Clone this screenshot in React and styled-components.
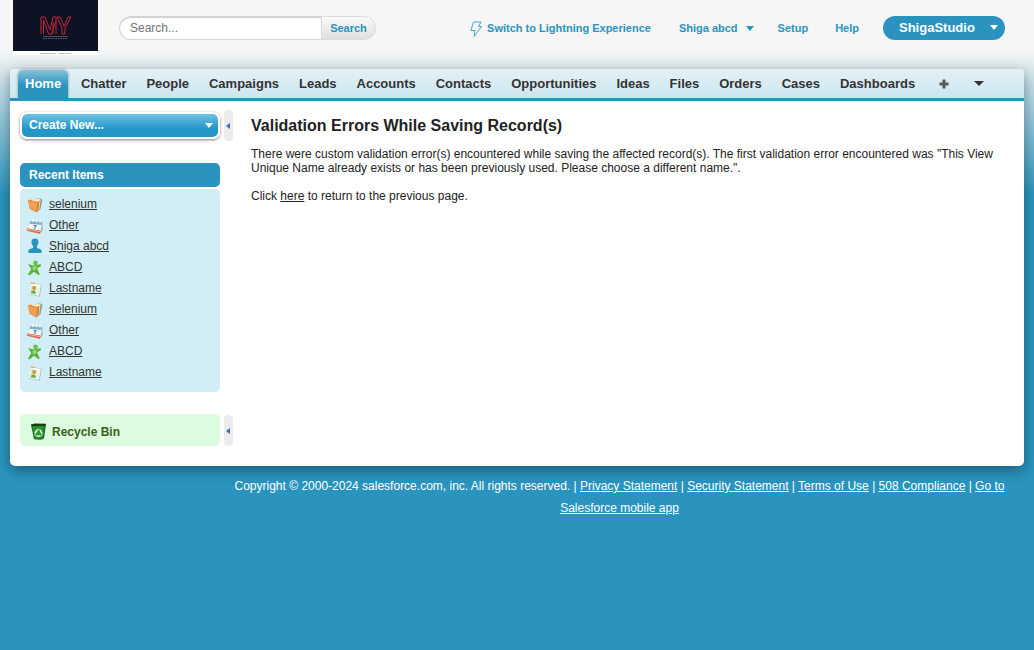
import React from "react";
import styled, { createGlobalStyle, css } from "styled-components";

const Global = createGlobalStyle`
  * { box-sizing: border-box; }
  html { background: #2a94be; }
  body {
    margin: 0;
    min-height: 650px;
    font: 12px/14px "Liberation Sans", Arial, sans-serif;
    color: #222;
    background: linear-gradient(#f6f6f6 0, #f6f6f6 50px, #2a94be 195px) no-repeat #2a94be;
  }
  a { color: inherit; }
`;

const Header = styled.header`
  height: 69px;
  display: flex;
  align-items: flex-start;
  padding: 0 29px 0 13px;
`;
const Logo = styled.svg`
  width: 85px;
  height: 55px;
  display: block;
  margin-right: 21px;
`;
const SearchForm = styled.div`
  display: flex;
  width: 257px;
  height: 24px;
  margin-top: 16px;
`;
const SearchInput = styled.input`
  width: 202px;
  height: 24px;
  border: 1px solid #d4d4d4;
  border-right: 0;
  border-radius: 12px 0 0 12px;
  padding: 0 0 1px 10px;
  background: #fff;
  box-shadow: inset 0 1px 1px #ccc;
  font: 12px "Liberation Sans", Arial, sans-serif;
  outline: 0;
  &::placeholder { color: #757575; opacity: 1; }
`;
const SearchButton = styled.button`
  width: 55px;
  height: 24px;
  padding: 0;
  border: 1px solid #dcdcdc;
  border-radius: 0 12px 12px 0;
  background: linear-gradient(#f9f9f9, #e0e0e0);
  color: #2a94be;
  font: bold 11px "Liberation Sans", Arial, sans-serif;
`;
const Links = styled.div`
  flex: 1;
  display: flex;
  justify-content: flex-end;
  align-items: center;
  height: 24px;
  margin-top: 16px;
  color: #2a94be;
  font-size: 11px;
  font-weight: bold;
`;
const HeaderLink = styled.span`
  display: flex;
  align-items: center;
  white-space: nowrap;
  margin-right: ${(p) => p.$gap}px;
`;
const Bolt = styled.svg`
  width: 13px;
  height: 17px;
  margin: 2px 4px 0 0;
`;
const Caret = styled.i`
  flex: none;
  border: ${(p) => p.$size}px solid transparent;
  border-top-width: ${(p) => p.$size + 1}px;
  border-top-color: currentColor;
  border-bottom: 0;
`;
const AppMenu = styled.button`
  display: flex;
  align-items: center;
  justify-content: space-between;
  width: 122px;
  height: 24px;
  border: 0;
  border-radius: 12px;
  padding: 0 7px 1px 16px;
  background: #2a94be;
  color: #fff;
  font: bold 13px "Liberation Sans", Arial, sans-serif;
`;
const Panel = styled.main`
  height: 397px;
  margin: 0 10px;
  border-radius: 4px 4px 5px 5px;
  background: #fff;
  box-shadow: 0 4px 14px rgba(0, 0, 0, 0.38);
`;
const Nav = styled.nav`
  display: flex;
  height: 32px;
  padding: 1px 0 0 8px;
  border-bottom: 3px solid #2a94be;
  border-radius: 4px 4px 0 0;
  background: linear-gradient(#e3f1f6, #cde6ee);
`;
const Tab = styled.span`
  height: 28px;
  line-height: 27px;
  font-size: 13px;
  font-weight: bold;
  color: #333;
  padding: 0 ${(p) => (p.$active ? 7 : 9.97)}px;
  ${(p) =>
    p.$active &&
    css`
      width: 50px;
      margin-right: 3px;
      color: #fff;
      border-radius: 5px 5px 0 0;
      background: linear-gradient(#85c1da, #2a94be 55%);
      box-shadow: 0 0 3px rgba(0, 0, 0, 0.4);
      clip-path: inset(-3px -3px 0 -3px);
    `}
`;
const NavIcon = styled.svg`
  width: 10px;
  height: 10px;
  margin: 9px 0 0 ${(p) => p.$gap}px;
`;
const Columns = styled.div`
  display: grid;
  grid-template-columns: 200px 9px 1fr;
  column-gap: 4px;
  padding: 9px 0 0 10px;
`;
const Sidebar = styled.aside`
  padding-top: 2px;
`;
const CreateButton = styled.button`
  display: flex;
  align-items: center;
  justify-content: space-between;
  width: 200px;
  height: 27px;
  padding: 0 5px 1px 7px;
  border: 2px solid #fff;
  border-radius: 7px;
  background: linear-gradient(#70c2e2, #2197c8 65%, #2496c6) padding-box;
  box-shadow: 0 1px 3px rgba(0, 0, 0, 0.5);
  color: #fff;
  font: bold 12px "Liberation Sans", Arial, sans-serif;
`;
const SectionTitle = styled.h2`
  height: 24px;
  margin: 24px 0 2px;
  padding-left: 9px;
  border-radius: 5px;
  background: #2a94be;
  color: #fff;
  font-size: 12px;
  line-height: 24px;
`;
const RecentList = styled.ul`
  height: 203px;
  margin: 0;
  padding: 4px 0 0 7px;
  list-style: none;
  border-radius: 5px;
  background: #d1eef6;
`;
const RecentRow = styled.li`
  display: flex;
  align-items: center;
  height: 21px;
  color: #333;
  a { margin-left: 6px; }
`;
const RowIcon = styled.svg`
  width: 16px;
  height: 16px;
  margin-top: ${(p) => (p.$low ? 2 : 0)}px;
`;
const RecycleBin = styled.div`
  display: flex;
  align-items: center;
  height: 32px;
  margin-top: 22px;
  padding: 3px 0 0 10px;
  border-radius: 5px;
  background: #dcfbdf;
  color: #3b5f1c;
  font-weight: bold;
`;
const BinIcon = styled.svg`
  width: 17px;
  height: 17px;
  margin-right: 5px;
`;
const Handles = styled.div`
  display: flex;
  flex-direction: column;
  justify-content: space-between;
  height: 336px;
`;
const Handle = styled.span`
  display: flex;
  align-items: center;
  height: 31px;
  padding-left: 2px;
  border-radius: 4px;
  background: #ebebeb;
  &::before {
    content: "";
    border: 3px solid transparent;
    border-right: 4px solid #3a6fb7;
    border-left: 0;
  }
`;
const Content = styled.section`
  padding: 7px 20px 0 14px;
  h1 { margin: 0 0 13px; font-size: 16px; line-height: 17px; }
  p { margin: 0 0 14px; }
`;
const Footer = styled.footer`
  width: 785px;
  margin: 9px 0 0 227px;
  text-align: center;
  line-height: 22px;
  color: #fff;
`;

const FolderIcon = () => (
  <>
    <path d="M7 2.200l6-1 2.500 1.500-2 9.500-4 3z" fill="#a39a8d" />
    <path d="M6 2.600l6-.8 1.500 1-1.500 10-2.600 1.500z" fill="#f8ead0" />
    <path d="M1 3.200l3-.6 1.500 1.200 5 .9-1 10.800-7-3.700z" fill="#e98b3d" />
    <path d="M1.300 4.300l8.700 1.700-.8 8.300L2.800 11z" fill="#f3a057" />
    <path d="M10.500 5l2-1.500-1.200 9.500-1.800 2.300z" fill="#cf7529" />
  </>
);
const CalendarIcon = () => (
  <>
    <path d="M3 3.500l12.500.5v8.500L13 15.700 0 12.500l.5-2z" fill="#9db0b8" />
    <path d="M3.500 3.500L15 4.500 13.700 13 .3 10.600z" fill="#f1f8fb" />
    <path d="M3.700 3L15 4l-.4 3L2.400 5.800z" fill="#7bb4d0" />
    <path d="M0 10.300l13.300 2.200-.5 3.200L0 12.700z" fill="#d9693b" />
    <path d="M.4 11.300l12.500 2.300" stroke="#f9dccb" strokeWidth=".7" />
    <path d="M6 1v3M9.500 1.200v3M13 1.500v3" stroke="#f3f8fa" strokeWidth="1.500" />
    <path d="M6.500 7.500l2.500.3-1.500 3" stroke="#3685b5" strokeWidth="1.200" fill="none" />
  </>
);
const PersonIcon = () => (
  <path d="M8 .5C3.700.5 3.800 5.400 6 8v2l-3.500 1.200c-1.400.7-1.500 2.500-.8 3.900h12.600c.7-1.400.6-3.200-.8-3.900L10 10V8C12.200 5.400 12.300.5 8 .5z" fill="#2a94be" />
);
const StarPersonIcon = () => (
  <>
    <path d="M1 4l5.200 1.500 7.500-1.200.3 1.600-4 2.700 2.800 5.700-1.500.8-4.300-3.300-4.500 3.700-1.500-1L4.300 9z" fill="#5ab137" />
    <path d="M5.500 6.700l4.500-.6-1.200 3.700-3 .5z" fill="#9ad873" />
    <circle cx="8.500" cy="2.900" r="2.400" fill="#72c14d" />
  </>
);
const ContactIcon = () => (
  <>
    <path d="M4 2l10.500 1.500-1.800 12.300L2 13.300z" fill="#a4b3b6" />
    <path d="M3.800 1.200l4 .5.500 1.200 5.600.8L12 15 2.200 12.700z" fill="#f7f9f5" />
    <path d="M3.800 1.200l4 .5.500 1.200-4.700-.2z" fill="#eda068" />
    <path d="M4.500 4.500l5.300.8-1 8L3.300 12z" fill="#cbe5bc" />
    <circle cx="7.100" cy="7" r="1.900" fill="#d9913f" />
    <path d="M3.800 12c.5-3.700 5-3.500 5 .9z" fill="#5caf43" />
    <path d="M11.200 7l1 .2M10.900 9l1 .2M10.600 11l1 .2" stroke="#bcc9c6" />
  </>
);
const icons = {
  folder: FolderIcon,
  calendar: CalendarIcon,
  person: PersonIcon,
  star: StarPersonIcon,
  contact: ContactIcon,
};

const tabs = ["Chatter", "People", "Campaigns", "Leads", "Accounts", "Contacts", "Opportunities", "Ideas", "Files", "Orders", "Cases", "Dashboards"];
const recent = [
  ["folder", "selenium"],
  ["calendar", "Other"],
  ["person", "Shiga abcd"],
  ["star", "ABCD"],
  ["contact", "Lastname"],
  ["folder", "selenium"],
  ["calendar", "Other"],
  ["star", "ABCD"],
  ["contact", "Lastname"],
];

export default function App() {
  return (
    <>
      <Global />
      <Header>
        <Logo viewBox="0 0 85 55">
          <path fill="#fff" d="M0 0h85v55H0z" />
          <path fill="#0d1224" d="M0 0h85v51H0z" />
          <g fill="none" stroke="#c62732" strokeWidth="1">
            <path d="M28 34V17h4l5 13 3-13h3v17M30.500 34V20l5 14h3l4-12" />
            <path d="M44 17h3l4 9 4-9h3L52 28v6h-3v-6l-5-11zM40 34V22" />
          </g>
          <path d="M30 36.500h25" stroke="#77777d" strokeWidth=".6" />
          <path d="M30 38.500h25" stroke="#62636c" strokeDasharray="1.500 1" />
          <path d="M27 53.500h16M46 53.500h12" stroke="#aaa" strokeDasharray="1.500 .6" />
        </Logo>
        <SearchForm>
          <SearchInput placeholder="Search..." />
          <SearchButton>Search</SearchButton>
        </SearchForm>
        <Links>
          <HeaderLink $gap={28}>
            <Bolt viewBox="0 0 13 17" fill="none" stroke="#4aa5c9">
              <path d="M3.500 1h7.500L8.500 5.500h3L4 15.500 5 9.500H.8z" />
            </Bolt>
            Switch to Lightning Experience
          </HeaderLink>
          <HeaderLink $gap={24}>
            <span>Shiga abcd</span>
            <Caret $size={4} style={{ marginLeft: 8 }} />
          </HeaderLink>
          <HeaderLink $gap={27}>Setup</HeaderLink>
          <HeaderLink $gap={24}>Help</HeaderLink>
          <AppMenu>
            ShigaStudio
            <Caret $size={4} />
          </AppMenu>
        </Links>
      </Header>
      <Panel>
        <Nav>
          <Tab $active>Home</Tab>
          {tabs.map((t) => (
            <Tab key={t}>{t}</Tab>
          ))}
          <NavIcon $gap={14} viewBox="0 0 10 10">
            <path d="M3.500.500h3v3h3v3h-3v3h-3v-3h-3v-3h3z" fill="#58595b" />
          </NavIcon>
          <NavIcon $gap={25} viewBox="0 0 10 10">
            <path d="M0 2h10L5 7z" fill="#333" />
          </NavIcon>
        </Nav>
        <Columns>
          <Sidebar>
            <CreateButton>
              Create New...
              <Caret $size={4} />
            </CreateButton>
            <SectionTitle>Recent Items</SectionTitle>
            <RecentList>
              {recent.map(([kind, label], i) => {
                const Icon = icons[kind];
                return (
                  <RecentRow key={i}>
                    <RowIcon $low={kind !== "person"} viewBox="0 0 16 16"><Icon /></RowIcon>
                    <a href="#">{label}</a>
                  </RecentRow>
                );
              })}
            </RecentList>
            <RecycleBin>
              <BinIcon viewBox="0 0 17 17">
                <path d="M1 2l15-1-2 14.500-3 1.300-7-.6z" fill="#176b1d" />
                <path d="M2 3l12 .3-1.500 12-7.500.3z" fill="#2c942c" />
                <path d="M.8 1.500L5 .4l11 .4-.5 2L2 3.300z" fill="#173c17" />
                <path d="M7 7L5 10.500M10 7l2 3.500M6.500 13h4" stroke="#e4f5df" strokeWidth="1.700" />
                <path d="M7 6.500h2.500M4.500 11l1 2M12.500 11l-1.200 2" stroke="#bfe5b8" />
              </BinIcon>
              Recycle Bin
            </RecycleBin>
          </Sidebar>
          <Handles>
            <Handle />
            <Handle />
          </Handles>
          <Content>
            <h1>Validation Errors While Saving Record(s)</h1>
            <p>
              There were custom validation error(s) encountered while saving the affected record(s). The first validation error encountered was "This View Unique Name already exists or has been previously used. Please choose a different name.".
            </p>
            <p>
              Click <a href="#">here</a> to return to the previous page.
            </p>
          </Content>
        </Columns>
      </Panel>
      <Footer>
        Copyright © 2000-2024 salesforce.com, inc. All rights reserved. | <a href="#">Privacy Statement</a> | <a href="#">Security Statement</a> | <a href="#">Terms of Use</a> | <a href="#">508 Compliance</a> | <a href="#">Go to Salesforce mobile app</a>
      </Footer>
    </>
  );
}
